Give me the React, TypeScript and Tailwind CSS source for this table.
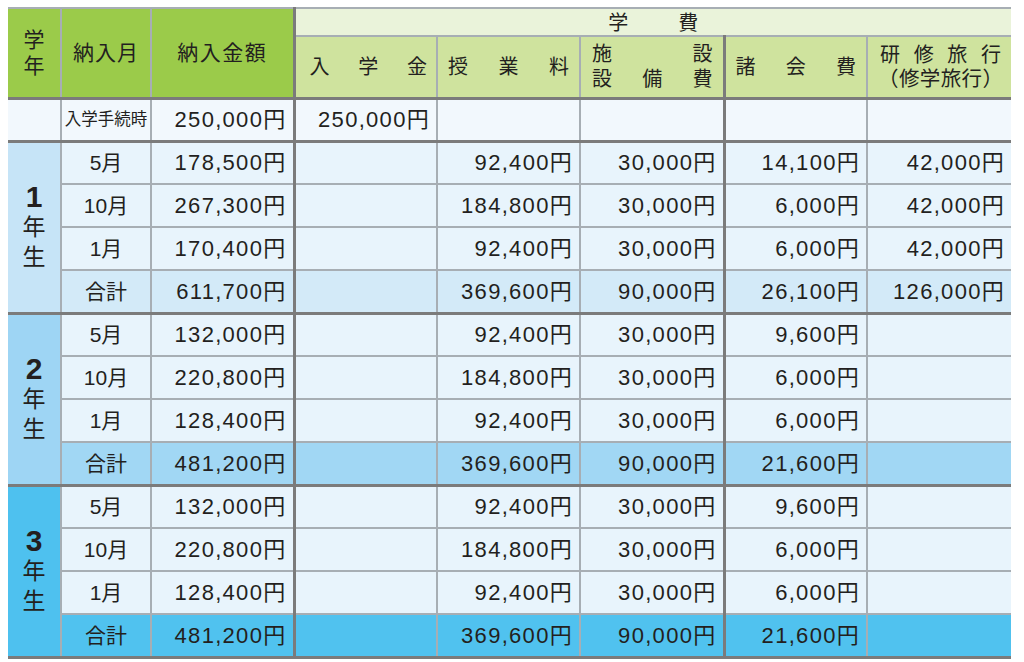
type Row = string[]

type Year = {
  label: string
  labelBg: string
  totalBg: string
  rows: Row[]
}

const years: Year[] = [
  {
    label: "1",
    labelBg: "bg-[#c6e4f7]",
    totalBg: "bg-[#d3eaf8]",
    rows: [
      ["5月", "178,500円", "", "92,400円", "30,000円", "14,100円", "42,000円"],
      ["10月", "267,300円", "", "184,800円", "30,000円", "6,000円", "42,000円"],
      ["1月", "170,400円", "", "92,400円", "30,000円", "6,000円", "42,000円"],
      ["合計", "611,700円", "", "369,600円", "90,000円", "26,100円", "126,000円"],
    ],
  },
  {
    label: "2",
    labelBg: "bg-[#9ed5f4]",
    totalBg: "bg-[#a1d7f4]",
    rows: [
      ["5月", "132,000円", "", "92,400円", "30,000円", "9,600円", ""],
      ["10月", "220,800円", "", "184,800円", "30,000円", "6,000円", ""],
      ["1月", "128,400円", "", "92,400円", "30,000円", "6,000円", ""],
      ["合計", "481,200円", "", "369,600円", "90,000円", "21,600円", ""],
    ],
  },
  {
    label: "3",
    labelBg: "bg-[#4ec1ef]",
    totalBg: "bg-[#50c2ef]",
    rows: [
      ["5月", "132,000円", "", "92,400円", "30,000円", "9,600円", ""],
      ["10月", "220,800円", "", "184,800円", "30,000円", "6,000円", ""],
      ["1月", "128,400円", "", "92,400円", "30,000円", "6,000円", ""],
      ["合計", "481,200円", "", "369,600円", "90,000円", "21,600円", ""],
    ],
  },
]

// thick separators sit after the 3rd and 6th columns
const thickRight = [false, true, false, false, true, false, false]

function Cell({
  value,
  index,
  bg,
  lastInGroup,
}: {
  value: string
  index: number
  bg: string
  lastInGroup: boolean
}) {
  const isMonth = index === 0
  return (
    <td
      className={[
        "h-[43px] border-2 border-[#a7aeb4] p-0 align-middle",
        bg,
        thickRight[index] ? "border-r-[3px] border-r-[#7b7b7b]" : "",
        index === 6 ? "border-r-0" : "",
        lastInGroup ? "border-b-[3px] border-b-[#7b7b7b]" : "",
        isMonth ? "text-center text-[21px]" : "pr-[6px] text-right text-[22px] tracking-[1.3px]",
      ].join(" ")}
    >
      {value}
    </td>
  )
}

export default function App() {
  return (
    <div className="min-h-[662px] w-[1024px] bg-white pl-[8px] pt-[7px] font-['Liberation_Sans','Noto_Sans_CJK_JP',sans-serif] text-[#231f20]">
      <table className="w-[1003px] table-fixed border-collapse">
        <colgroup>
          <col className="w-[53px]" />
          <col className="w-[90px]" />
          <col className="w-[143px]" />
          <col className="w-[143px]" />
          <col className="w-[143px]" />
          <col className="w-[144px]" />
          <col className="w-[143px]" />
          <col className="w-[144px]" />
        </colgroup>
        <thead>
          <tr className="h-[28px]">
            <th
              rowSpan={2}
              className="border-2 border-l-0 border-b-[3px] border-[#a7aeb4] border-b-[#7b7b7b] bg-[#9bcb4a] p-0 text-[21px] font-normal leading-[26px]"
            >
              <div className="flex flex-col items-center">
                <span>学</span>
                <span>年</span>
              </div>
            </th>
            <th
              rowSpan={2}
              className="border-2 border-b-[3px] border-[#a7aeb4] border-b-[#7b7b7b] bg-[#9bcb4a] p-0 text-[21px] font-normal tracking-[1px]"
            >
              納入月
            </th>
            <th
              rowSpan={2}
              className="border-2 border-b-[3px] border-r-[3px] border-[#a7aeb4] border-b-[#7b7b7b] border-r-[#7b7b7b] bg-[#9bcb4a] p-0 text-[21px] font-normal tracking-[1.5px]"
            >
              納入金額
            </th>
            <th
              colSpan={5}
              className="border-2 border-r-0 border-[#a7aeb4] bg-[#eaf3da] p-0 text-[20px] font-normal leading-none"
            >
              <div className="flex justify-center gap-[50px] pt-[1px]">
                <span>学</span>
                <span>費</span>
              </div>
            </th>
          </tr>
          <tr className="h-[62px] text-[20px]">
            <th className="border-2 border-b-[3px] border-[#a7aeb4] border-b-[#7b7b7b] bg-[#cfe39e] px-0 font-normal">
              <div className="flex justify-between pl-[14px] pr-[9px]">
                <span>入</span>
                <span>学</span>
                <span>金</span>
              </div>
            </th>
            <th className="border-2 border-b-[3px] border-[#a7aeb4] border-b-[#7b7b7b] bg-[#cfe39e] px-0 font-normal">
              <div className="flex justify-between pl-[10px] pr-[10px]">
                <span>授</span>
                <span>業</span>
                <span>料</span>
              </div>
            </th>
            <th className="border-2 border-b-[3px] border-r-[3px] border-[#a7aeb4] border-b-[#7b7b7b] border-r-[#7b7b7b] bg-[#cfe39e] px-0 font-normal leading-[25px]">
              <div className="flex flex-col pl-[11px] pr-[10px]">
                <div className="flex justify-between">
                  <span>施</span>
                  <span>設</span>
                </div>
                <div className="flex justify-between">
                  <span>設</span>
                  <span>備</span>
                  <span>費</span>
                </div>
              </div>
            </th>
            <th className="border-2 border-b-[3px] border-[#a7aeb4] border-b-[#7b7b7b] bg-[#cfe39e] px-0 font-normal">
              <div className="flex justify-between pl-[10px] pr-[10px]">
                <span>諸</span>
                <span>会</span>
                <span>費</span>
              </div>
            </th>
            <th className="border-2 border-r-0 border-b-[3px] border-[#a7aeb4] border-b-[#7b7b7b] bg-[#cfe39e] px-0 font-normal leading-[24px]">
              <div className="ml-[10px] flex w-[125px] flex-col">
                <div className="flex justify-between px-[2px]">
                  <span>研</span>
                  <span>修</span>
                  <span>旅</span>
                  <span>行</span>
                </div>
                <div className="text-left text-[20.5px] tracking-[0.4px]">（修学旅行）</div>
              </div>
            </th>
          </tr>
        </thead>
        <tbody>
          <tr className="h-[43px]">
            <td className="border-2 border-l-0 border-b-[3px] border-[#a7aeb4] border-b-[#7b7b7b] bg-[#f2f8fd] p-0" />
            <td className="border-2 border-b-[3px] border-[#a7aeb4] border-b-[#7b7b7b] bg-[#f2f8fd] p-0 text-center text-[16.5px]">
              入学手続時
            </td>
            <td className="border-2 border-b-[3px] border-r-[3px] border-[#a7aeb4] border-b-[#7b7b7b] border-r-[#7b7b7b] bg-[#f2f8fd] p-0 pr-[6px] text-right text-[22px] tracking-[1.3px]">
              250,000円
            </td>
            <td className="border-2 border-b-[3px] border-[#a7aeb4] border-b-[#7b7b7b] bg-[#f2f8fd] p-0 pr-[6px] text-right text-[22px] tracking-[1.3px]">
              250,000円
            </td>
            <td className="border-2 border-b-[3px] border-[#a7aeb4] border-b-[#7b7b7b] bg-[#f2f8fd] p-0" />
            <td className="border-2 border-b-[3px] border-r-[3px] border-[#a7aeb4] border-b-[#7b7b7b] border-r-[#7b7b7b] bg-[#f2f8fd] p-0" />
            <td className="border-2 border-b-[3px] border-[#a7aeb4] border-b-[#7b7b7b] bg-[#f2f8fd] p-0" />
            <td className="border-2 border-r-0 border-b-[3px] border-[#a7aeb4] border-b-[#7b7b7b] bg-[#f2f8fd] p-0" />
          </tr>
          {years.map((year) =>
            year.rows.map((row, ri) => {
              const isTotal = ri === year.rows.length - 1
              const bg = isTotal ? year.totalBg : "bg-[#e8f4fc]"
              return (
                <tr key={year.label + ri} className="h-[43px]">
                  {ri === 0 ? (
                    <td
                      rowSpan={year.rows.length}
                      className={`border-2 border-l-0 border-b-[3px] border-[#a7aeb4] border-b-[#7b7b7b] p-0 ${year.labelBg}`}
                    >
                      <div className="flex flex-col items-center leading-[30px]">
                        <span className="text-[30px] font-bold">{year.label}</span>
                        <span className="text-[23px]">年</span>
                        <span className="text-[23px]">生</span>
                      </div>
                    </td>
                  ) : null}
                  {row.map((value, ci) => (
                    <Cell
                      key={ci}
                      value={value}
                      index={ci}
                      bg={bg}
                      lastInGroup={isTotal}
                    />
                  ))}
                </tr>
              )
            }),
          )}
        </tbody>
      </table>
    </div>
  )
}
